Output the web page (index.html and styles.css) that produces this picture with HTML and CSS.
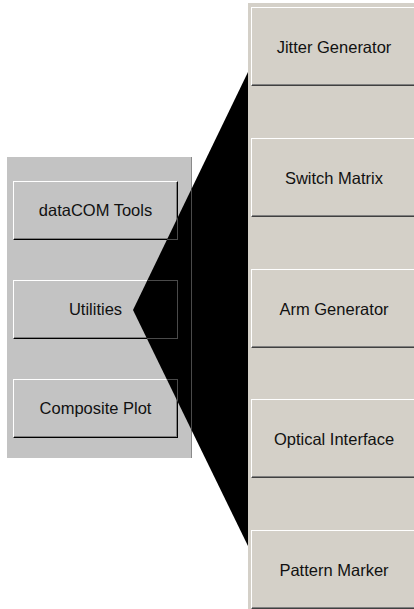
FILE: index.html
```html
<html>
<head>
    <meta charset="utf-8">
    <title>Utilities</title>
    <link rel="stylesheet" href="styles.css">
</head>
<body>
    <div class="screen">
        <div class="menu">
            <div class="btn">dataCOM Tools</div>
            <div class="btn">Utilities</div>
            <div class="btn">Composite Plot</div>
        </div>

        <div class="submenu">
            <div class="sub-btn">Jitter Generator</div>
            <div class="sub-btn">Switch Matrix</div>
            <div class="sub-btn">Arm Generator</div>
            <div class="sub-btn">Optical Interface</div>
            <div class="sub-btn">Pattern Marker</div>
        </div>

        <!-- callout from Utilities to its submenu -->
        <svg class="callout" width="414" height="609" viewBox="0 0 414 609">
            <defs>
                <clipPath id="wedge">
                    <polygon points="133,310 248,72 248,546"/>
                </clipPath>
            </defs>
            <polygon points="133,310 248,72 248,546" fill="#000"/>
            <g clip-path="url(#wedge)" fill="none" stroke="#4a4a4a" stroke-width="1">
                <line x1="191.5" y1="157" x2="191.5" y2="458"/>
                <rect x="13.5" y="181.5" width="164" height="58"/>
                <rect x="13.5" y="280.5" width="164" height="58"/>
                <rect x="13.5" y="379.5" width="164" height="58"/>
            </g>
        </svg>
    </div>
</body>
</html>
```

FILE: styles.css
```css
* {
    box-sizing: border-box;
    font-family: "Liberation Sans", Arial, sans-serif;
}

html, body {
    margin: 0;
    padding: 0;
    background-color: #ffffff;
}

.screen {
    position: relative;
    display: flex;
    align-items: flex-start;

    width: 414px;
    height: 609px;
    overflow: hidden;
}

.menu {
    display: flex;
    flex-direction: column;
    gap: 40px;

    flex-shrink: 0;
    width: 185px;
    height: 301px;

    margin-top: 157px;
    margin-left: 7px;

    padding: 24px 0 0 6px;

    background-color: #c3c3c3;
    border-right: 1px solid #8a8a8a;
}

.btn {
    display: flex;
    align-items: center;
    justify-content: center;

    width: 165px;
    height: 59px;

    background-color: #c3c3c3;
    border: 1px solid;
    border-color: #ffffff #000000 #000000 #ffffff;
    box-shadow: inset -1px -1px 0 #808080;

    font-size: 16.5px;
    color: #111111;
}

.submenu {
    display: flex;
    flex-direction: column;
    gap: 51.75px;

    flex-shrink: 0;
    width: 190px;
    height: 606px;

    margin-top: 3px;
    margin-left: 56px;

    padding: 4px 0 0 3px;

    background-color: #d4d0c8;
}

.sub-btn {
    display: flex;
    align-items: center;
    justify-content: center;

    flex-shrink: 0;
    width: 185px;
    height: 79px;
    padding: 2px 20px 0 0;

    background-color: #d4d0c8;
    border-top: 1px solid #ffffff;
    border-left: 1px solid #ffffff;
    border-bottom: 1px solid #404040;
    box-shadow: inset 0 -1px 0 #808080;

    font-size: 16.5px;
    color: #111111;
}

.callout {
    position: absolute;
    top: 0;
    left: 0;
    pointer-events: none;
}
```
